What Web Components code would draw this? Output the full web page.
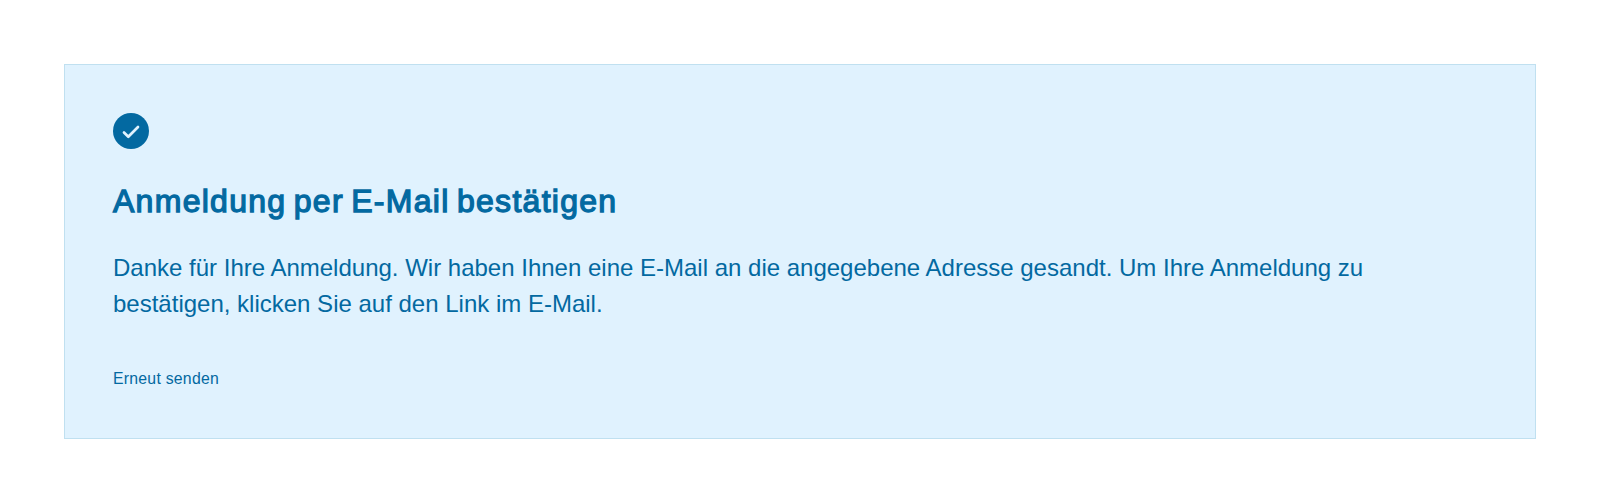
<!DOCTYPE html>
<html lang="de"><head><meta charset="utf-8"><title>Anmeldung</title>
<style>body{margin:0;background:#fff;padding:64px}</style></head><body>
<notice-card><status-icon slot="icon"></status-icon><span slot="title">Anmeldung per E-Mail bestätigen</span>Danke für Ihre Anmeldung. Wir haben Ihnen eine E-Mail an die angegebene Adresse gesandt. Um Ihre Anmeldung zu bestätigen, klicken Sie auf den Link im E-Mail.<text-action slot="action">Erneut senden</text-action></notice-card>
<script>
class StatusIcon extends HTMLElement{constructor(){super();this.attachShadow({mode:'open'}).innerHTML=`<style>:host{display:block;width:36px;height:36px}svg{display:block}</style><svg width="36" height="36" viewBox="0 0 36 36"><circle cx="18" cy="18" r="18" fill="#0369a1"/><path d="M11 19.5L15.3 23.7L25 14" fill="none" stroke="#e0f2fe" stroke-width="2.7" stroke-linecap="round" stroke-linejoin="round"/></svg>`}}
class TextAction extends HTMLElement{constructor(){super();this.attachShadow({mode:'open'}).innerHTML=`<style>:host{display:block}button{display:block;border:0;padding:0;background:none;color:inherit;font:15.8px/24px "Liberation Sans",sans-serif;letter-spacing:.25px}</style><button><slot></slot></button>`}}
class NoticeCard extends HTMLElement{constructor(){super();this.attachShadow({mode:'open'}).innerHTML=`<style>:host{display:block;box-sizing:border-box;height:375px;border:1px solid #c0e0f0;background:#e0f2fe;padding:48px;color:#0369a1;font-family:"Liberation Sans",sans-serif}h2{margin:32px 0 29px;font:400 32px/40px "Liberation Sans",sans-serif;letter-spacing:1.28px;word-spacing:-2.8px;-webkit-text-stroke:1.3px currentColor}p{margin:0 0 45px;font-size:24px;line-height:36px;max-width:1280px}</style><slot name="icon"></slot><h2><slot name="title"></slot></h2><p><slot></slot></p><slot name="action"></slot>`}}
customElements.define('status-icon',StatusIcon);customElements.define('text-action',TextAction);customElements.define('notice-card',NoticeCard);
</script></body></html>
